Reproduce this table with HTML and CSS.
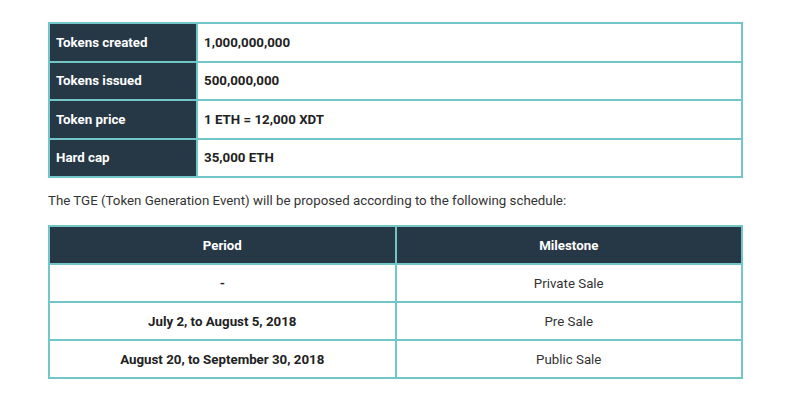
FILE: index.html
```html
<!DOCTYPE html>
<html>
<head>
<meta charset="utf-8">
<link rel="stylesheet" href="styles.css">
</head>
<body>
<div class="content">
  <table class="info">
    <tr><th>Tokens created</th><td>1,000,000,000</td></tr>
    <tr><th>Tokens issued</th><td>500,000,000</td></tr>
    <tr><th>Token price</th><td>1 ETH = 12,000 XDT</td></tr>
    <tr><th>Hard cap</th><td>35,000 ETH</td></tr>
  </table>
  <p class="note">The TGE (Token Generation Event) will be proposed according to the following schedule:</p>
  <table class="schedule">
    <tr><th>Period</th><th>Milestone</th></tr>
    <tr><td class="b">-</td><td>Private Sale</td></tr>
    <tr><td class="b">July 2, to August 5, 2018</td><td>Pre Sale</td></tr>
    <tr><td class="b">August 20, to September 30, 2018</td><td>Public Sale</td></tr>
  </table>
</div>
</body>
</html>
```
FILE: styles.css
```css
html, body {
  margin: 0;
  padding: 0;
  background: #ffffff;
}
body {
  font-family: Roboto, "Liberation Sans", sans-serif;
  color: #333333;
}
.content {
  padding: 22px 47px 0 48px;
}
table {
  width: 695px;
  border-collapse: collapse;
  font-size: 13.3px;
}
th, td {
  border: 2px solid #72c6c7;
  padding: 0 6px;
}
.info th, .info td {
  height: 36.5px;
}
.schedule th, .schedule td {
  height: 36px;
}
.info th {
  width: 134px;
  background: #263746;
  color: #ffffff;
  font-weight: 700;
  text-align: left;
}
.info td {
  font-weight: 700;
  color: #222222;
  text-align: left;
}
.note {
  margin: 15px 0 17px;
  font-size: 13.3px;
  color: #333333;
}
.schedule th {
  background: #263746;
  color: #ffffff;
  font-weight: 700;
  text-align: center;
  width: 50%;
}
.schedule td {
  text-align: center;
  color: #333333;
}
.schedule td.b {
  font-weight: 700;
  color: #222222;
}
```
